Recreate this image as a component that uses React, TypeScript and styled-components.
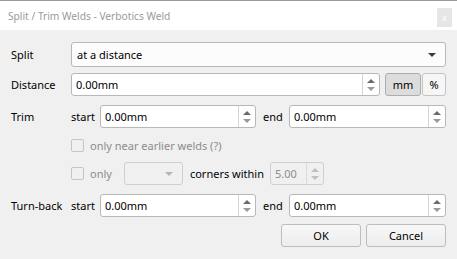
import styled, { createGlobalStyle } from 'styled-components'

const Global = createGlobalStyle`
    html, body {
        margin: 0;
        padding: 0;
        background: #f0f0f0;
    }
    body {
        font-family: 'Noto Sans', 'Open Sans', sans-serif;
        font-size: 11px;
        color: #000;
    }
`

const Window = styled.div`
    width: 457px;
    height: 259px;
    box-sizing: border-box;
    border-top: 1px solid #9a9a9a;
    background: #f0f0f0;
    display: flex;
    flex-direction: column;
    overflow: hidden;
`

const TitleBar = styled.div`
    height: 29px;
    background: #fff;
    display: flex;
    align-items: center;
    justify-content: space-between;
    padding: 0 5px 0 8px;
`

const TitleText = styled.span`
    color: #9a9a9a;
    font-size: 10.2px;
`

const CloseBox = styled.div`
    width: 15px;
    height: 19px;
    background: #e6e6e6;
    color: #fff;
    font-size: 9px;
    display: flex;
    align-items: center;
    justify-content: center;
    margin-top: 4px;
`

const Body = styled.div`
    padding: 0 11px;
    display: flex;
    flex-direction: column;
`

const Row = styled.div<{ $mt: number; $tall?: boolean }>`
    display: grid;
    grid-template-columns: 60px 1fr;
    align-items: center;
    height: ${p => (p.$tall ? 25 : 23)}px;
    margin-top: ${p => p.$mt}px;
`

const Label = styled.span<{ $muted?: boolean }>`
    color: ${p => (p.$muted ? '#8c8c8c' : '#000')};
    white-space: nowrap;
`

const Combo = styled.div`
    height: 25px;
    box-sizing: border-box;
    border: 1px solid #b8b8b8;
    border-radius: 3px;
    background: #fcfcfc;
    display: flex;
    align-items: center;
    justify-content: space-between;
    padding: 0 9px 0 5px;
`

const Arrow = styled.span<{ $muted?: boolean }>`
    width: 0;
    height: 0;
    border-left: 4px solid transparent;
    border-right: 4px solid transparent;
    border-top: 4px solid ${p => (p.$muted ? '#b5b5b5' : '#3c3c3c')};
`

const Spin = styled.div<{ $width?: number; $muted?: boolean }>`
    height: 23px;
    box-sizing: border-box;
    ${p => (p.$width ? `width: ${p.$width}px;` : 'flex: 1; min-width: 0;')}
    border: 1px solid ${p => (p.$muted ? '#cfcfcf' : '#b8b8b8')};
    border-radius: 3px;
    background: ${p => (p.$muted ? '#f0f0f0' : '#fff')};
    display: flex;
    align-items: stretch;
`

const SpinValue = styled.span<{ $muted?: boolean }>`
    flex: 1;
    padding-left: 4px;
    display: flex;
    align-items: center;
    color: ${p => (p.$muted ? '#8c8c8c' : '#000')};
`

const SpinArrows = styled.div<{ $muted?: boolean }>`
    width: 16px;
    border-left: 1px solid ${p => (p.$muted ? '#dadada' : '#d4d4d4')};
    display: flex;
    flex-direction: column;
    align-items: center;
    justify-content: center;
    gap: 4px;
`

const Tri = styled.span<{ $up?: boolean; $muted?: boolean }>`
    width: 0;
    height: 0;
    border-left: 4px solid transparent;
    border-right: 4px solid transparent;
    ${p => (p.$up ? 'border-bottom' : 'border-top')}: 4px solid ${p =>
        p.$muted ? '#c0c0c0' : p.$up ? '#6a6a6a' : '#9a9a9a'};
`

const Inline = styled.div<{ $gap?: number; $ml?: number }>`
    display: flex;
    align-items: center;
    gap: ${p => p.$gap ?? 0}px;
    margin-left: ${p => p.$ml ?? 0}px;
`

const Pair = styled.div`
    display: grid;
    grid-template-columns: 29px 156px 33px 1fr;
    align-items: center;
`

const EndLabel = styled.span`
    padding-left: 7px;
`

const Toggle = styled.div<{ $pressed?: boolean; $width: number }>`
    width: ${p => p.$width}px;
    height: 23px;
    box-sizing: border-box;
    border: 1px solid ${p => (p.$pressed ? '#adadad' : '#c4c4c4')};
    border-radius: 3px;
    background: ${p => (p.$pressed ? '#dcdcdc' : '#f6f6f6')};
    display: flex;
    align-items: center;
    justify-content: center;
`

const Check = styled.span`
    width: 13px;
    height: 13px;
    box-sizing: border-box;
    border: 1px solid #c4c4c4;
    border-radius: 2px;
    background: #f0f0f0;
    margin-right: 6px;
    flex-shrink: 0;
`

const SmallCombo = styled.div`
    width: 59px;
    height: 23px;
    box-sizing: border-box;
    border: 1px solid #cfcfcf;
    border-radius: 3px;
    background: #f0f0f0;
    display: flex;
    align-items: center;
    justify-content: flex-end;
    padding-right: 9px;
    margin: 0 7px 0 12px;
`

const Buttons = styled.div`
    display: flex;
    justify-content: flex-end;
    gap: 5px;
    margin-top: 7px;
`

const Button = styled.div`
    width: 80px;
    height: 23px;
    box-sizing: border-box;
    border: 1px solid #bdbdbd;
    border-radius: 3px;
    background: linear-gradient(#f7f7f7, #ededed);
    display: flex;
    align-items: center;
    justify-content: center;
`

function SpinBox({ value, width, muted }: { value: string; width?: number; muted?: boolean }) {
    return (
        <Spin $width={width} $muted={muted}>
            <SpinValue $muted={muted}>{value}</SpinValue>
            <SpinArrows $muted={muted}>
                <Tri $up $muted={muted} />
                <Tri $muted={muted} />
            </SpinArrows>
        </Spin>
    )
}

function StartEnd({ label }: { label: string }) {
    return (
        <Row $mt={9}>
            <Label>{label}</Label>
            <Pair>
                <Label>start</Label>
                <SpinBox value="0.00mm" />
                <EndLabel>end</EndLabel>
                <SpinBox value="0.00mm" />
            </Pair>
        </Row>
    )
}

export default function App() {
    return (
        <>
            <Global />
            <Window>
                <TitleBar>
                    <TitleText>Split / Trim Welds - Verbotics Weld</TitleText>
                    <CloseBox>x</CloseBox>
                </TitleBar>
                <Body>
                    <Row $mt={12} $tall>
                        <Label>Split</Label>
                        <Combo>
                            <span>at a distance</span>
                            <Arrow />
                        </Combo>
                    </Row>
                    <Row $mt={6}>
                        <Label>Distance</Label>
                        <Inline>
                            <SpinBox value="0.00mm" />
                            <Inline $gap={1} $ml={5}>
                                <Toggle $pressed $width={36}>mm</Toggle>
                                <Toggle $width={24}>%</Toggle>
                            </Inline>
                        </Inline>
                    </Row>
                    <StartEnd label="Trim" />
                    <Row $mt={6}>
                        <span />
                        <Inline>
                            <Check />
                            <Label $muted>only near earlier welds (?)</Label>
                        </Inline>
                    </Row>
                    <Row $mt={5}>
                        <span />
                        <Inline>
                            <Check />
                            <Label $muted>only</Label>
                            <SmallCombo>
                                <Arrow $muted />
                            </SmallCombo>
                            <Label>corners within</Label>
                            <Inline $ml={6}>
                                <SpinBox value="5.00" width={54} muted />
                            </Inline>
                        </Inline>
                    </Row>
                    <StartEnd label="Turn-back" />
                    <Buttons>
                        <Button>OK</Button>
                        <Button>Cancel</Button>
                    </Buttons>
                </Body>
            </Window>
        </>
    )
}
